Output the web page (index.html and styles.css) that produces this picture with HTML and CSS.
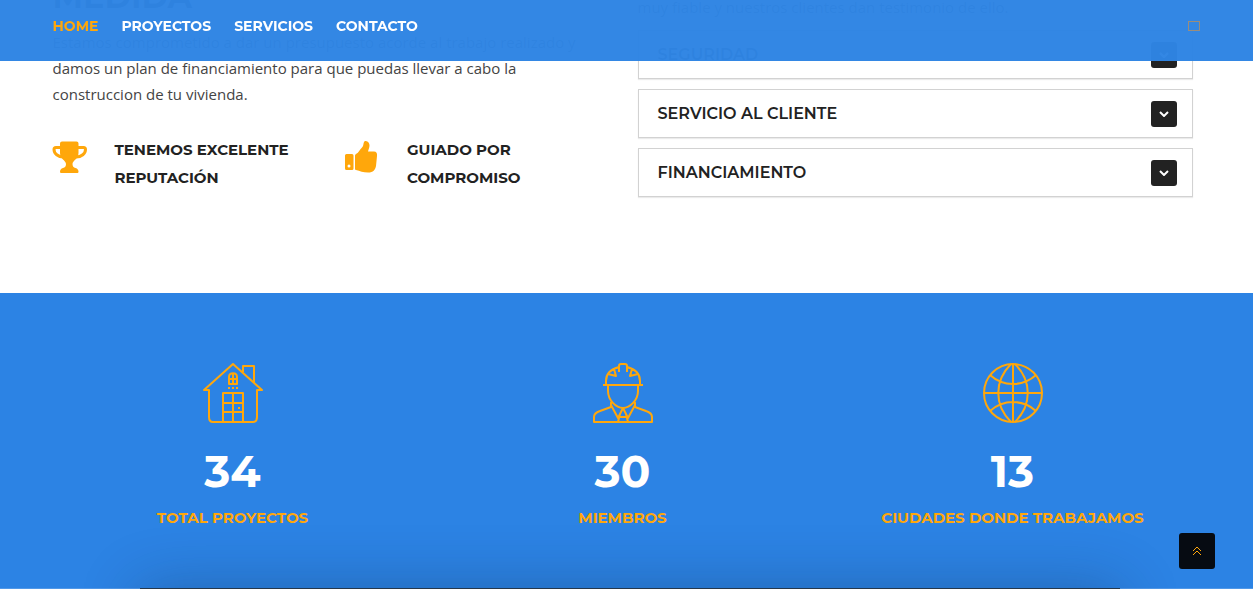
FILE: index.html
```html
<!DOCTYPE html>
<html lang="es">
<head>
<meta charset="utf-8">
<meta name="viewport" content="width=device-width, initial-scale=1">
<title>Construcción a medida</title>
<link rel="stylesheet" href="styles.css">
</head>
<body>
<header class="site-header">
  <div class="container header-row">
    <nav class="menu" aria-label="Principal">
      <a class="active" href="#home">HOME</a>
      <a href="#proyectos">PROYECTOS</a>
      <a href="#servicios">SERVICIOS</a>
      <a href="#contacto">CONTACTO</a>
    </nav>
    <button class="search" type="button" aria-label="Buscar"></button>
  </div>
</header>

<main>
  <section class="about container">
    <div class="intro">
      <h2>MEDIDA</h2>
      <p>Estamos comprometido a dar un presupuesto acorde al trabajo realizado y damos un plan de financiamiento para que puedas llevar a cabo la construccion de tu vivienda.</p>
      <div class="features">
        <div class="feature">
          <svg width="34" height="34" viewBox="0 0 34 34" aria-hidden="true">
            <path d="M7 2.500Q7 .5 9 .5h14.500q2 0 2 2V12c0 6-6 7.500-6 11 0 2.500 1 3.500 3 4 2 .5 3 2 3 3.500Q25.500 32 24.500 32H8q-1 0-1-1.500C7 29 8 27.500 10 27c2-.5 3-1.500 3-4 0-3.500-6-5-6-11z"/>
            <path class="handle" d="M8 6.500H3Q1 6.500 1 8.500c0 4 4 7.500 9.500 7.500M24.500 6.500h6q2 0 2 2c0 4-4 7.500-9.500 7.500"/>
          </svg>
          <h3>TENEMOS EXCELENTE REPUTACIÓN</h3>
        </div>
        <div class="feature">
          <svg width="34" height="34" viewBox="0 0 34 34" aria-hidden="true">
            <path fill-rule="evenodd" d="M1.500 13H7q1.500 0 1.500 1.500v13Q8.500 29 7 29H1.500Q0 29 0 27.500v-13Q0 13 1.500 13zm2.500 10.500a1.500 1.500 0 1 0 0 3 1.500 1.500 0 0 0 0-3z"/>
            <path d="M10 14.500q0-1 1-1.500c3-1.500 3.500-4.500 6-6.500C19 5 18 1 20 0c3-.5 4.500 2 4.500 4.500 0 2-1 4-1.500 6h6q3.500 0 3 4.500L31 25c-1 4-2.500 6.500-8 6.500-5 0-8-1.500-12-2.500q-1 0-1-1z"/>
          </svg>
          <h3>GUIADO POR COMPROMISO</h3>
        </div>
      </div>
    </div>
    <div class="reasons">
      <p>muy fiable y nuestros clientes dan testimonio de ello.</p>
      <button class="panel" type="button" aria-expanded="false">SEGURIDAD
        <span class="toggle"><svg width="10" height="6" viewBox="0 0 10 6"><path d="M1 1l4 4 4-4"/></svg></span></button>
      <button class="panel" type="button" aria-expanded="false">SERVICIO AL CLIENTE
        <span class="toggle"><svg width="10" height="6" viewBox="0 0 10 6"><path d="M1 1l4 4 4-4"/></svg></span></button>
      <button class="panel" type="button" aria-expanded="false">FINANCIAMIENTO
        <span class="toggle"><svg width="10" height="6" viewBox="0 0 10 6"><path d="M1 1l4 4 4-4"/></svg></span></button>
    </div>
  </section>

  <section class="stats">
    <div class="stats-grid">
      <div class="stat">
        <svg width="60" height="60" viewBox="0 0 60 60" aria-hidden="true">
          <path d="M6 27H1L30 1l29 26h-5v27q0 5-4 5H10q-4 0-4-5zM40 9V3h11v16"/>
          <path d="M20 59V30h20v29M30 30v29M20 40h20M20 49h20M26 21v-7c0-5 8-5 8 0v7zM30 10v11M26 16h8"/>
          <path d="M25 25h2M29 25h2M33 25h2M35 45h2"/>
        </svg>
        <strong>34</strong>
        <span>TOTAL PROYECTOS</span>
      </div>
      <div class="stat">
        <svg width="60" height="60" viewBox="0 0 60 60" aria-hidden="true">
          <path d="M13 21V18C13 10 18 6 26 4M34 4c8 2 13 6 13 14v3M10 22h40M26 9V3q0-2 2-2h4q2 0 2 2v6M15 11l8 2-2-7M45 11l-8 2 2-7"/>
          <path d="M15 22v6c0 9 8 17 15 17s15-8 15-17v-6"/>
          <path d="M18 39v5L7 48Q1 50 1 54v5h58v-5q0-4-6-6l-11-4v-5M18 42l7 13 5-10 5 10 7-13M27 51l-2 8M33 51l2 8M27 54h6"/>
        </svg>
        <strong>30</strong>
        <span>MIEMBROS</span>
      </div>
      <div class="stat">
        <svg width="60" height="60" viewBox="0 0 60 60" aria-hidden="true">
          <circle cx="30" cy="30" r="29"/>
          <path d="M30 1v58M1 30h58M28 1C11 18 11 42 28 59M32 1c17 17 17 41 0 58M7 12q10 9 23 9t23-9M7 48q10-9 23-9t23 9"/>
        </svg>
        <strong>13</strong>
        <span>CIUDADES DONDE TRABAJAMOS</span>
      </div>
    </div>
  </section>
  <section class="banner"><div class="banner-box"></div></section>
</main>

<a class="to-top" href="#home" aria-label="Volver arriba">
  <svg width="10" height="10" viewBox="0 0 10 10"><path d="M1 5l4-4 4 4M1 9l4-4 4 4"/></svg>
</a>
</body>
</html>
```
FILE: styles.css
```css
* { box-sizing: border-box; }

body {
  margin: 0;
  height: 100vh;
  overflow: hidden;
  background: #fff;
  color: #444;
  font: 15px/26px "Open Sans", "Noto Sans", sans-serif;
}

h2, h3, .menu, .panel, .stat { font-family: Montserrat, Inter, sans-serif; }
h2, h3, p { margin: 0; }
button { font: inherit; cursor: pointer; }
a { text-decoration: none; }
main { display: flex; flex-direction: column; }

.container {
  width: 100%;
  max-width: 1178px;
  margin: 0 auto;
  padding: 0 23px 0 15px;
}

.site-header {
  position: fixed;
  inset: 0 0 auto;
  z-index: 10;
  background: rgba(47, 133, 227, 0.98);
}

.header-row {
  display: flex;
  align-items: center;
  justify-content: space-between;
  padding-top: 13px;
  padding-bottom: 22px;
}

.menu { display: flex; gap: 23px; font-size: 14px; font-weight: 700; }
.menu a { color: #fff; }
.menu .active { color: #ffa70b; }

.search {
  width: 12px;
  height: 10px;
  margin-right: -7px;
  padding: 0;
  background: none;
  border: 1px solid #9a8d7c;
}

.about {
  display: grid;
  grid-template-columns: 1fr 1fr;
  gap: 30px;
  margin-top: -25px;
  padding-bottom: 96px;
}

h2 { color: #222; font-size: 32px; font-weight: 700; line-height: 44px; margin-bottom: 10px; }

.features { display: grid; grid-template-columns: 1fr 1fr; gap: 30px; margin-top: 29px; }
.feature { display: flex; gap: 28px; }
.feature svg { flex: none; margin-top: 5px; fill: #ffa70b; overflow: visible; }
.feature .handle { fill: none; stroke: #ffa70b; stroke-width: 3; }
h3 { color: #222; font-size: 15px; font-weight: 700; line-height: 28px; }

.reasons { display: flex; flex-direction: column; gap: 10px; padding-top: 19px; }

.panel {
  display: flex;
  align-items: center;
  justify-content: space-between;
  width: 100%;
  padding: 11px 15px 10px 19px;
  background: #fff;
  border: 1px solid #d2d2d2;
  box-shadow: 0 1px 1px rgba(0, 0, 0, 0.08);
  color: #222;
  font-size: 16px;
  font-weight: 600;
  text-align: left;
}

.toggle {
  display: grid;
  place-items: center;
  width: 26px;
  height: 26px;
  border-radius: 3px;
  background: #222;
}
.toggle path { fill: none; stroke: #fff; stroke-width: 2; }

.stats { padding: 70px 8px 57px 0; background: #2c83e4; }
.stats-grid {
  display: grid;
  grid-template-columns: repeat(3, 1fr);
  max-width: 1170px;
  margin: 0 auto;
}
.stat { display: flex; flex-direction: column; align-items: center; color: #ffa70b; font-weight: 700; font-size: 15px; }
.stat svg { fill: none; stroke: #ffa70b; stroke-width: 2; stroke-linejoin: round; }
.stat strong { margin: 23px 0 9px; color: #fff; font-size: 44px; font-weight: 700; line-height: 50px; }

.banner { padding: 0 133px 0 140px; background: #5098e8; }
.banner-box { height: 120px; background: #26384b; box-shadow: 0 0 60px rgba(20, 40, 70, 0.32); }

.to-top {
  position: fixed;
  right: 38px;
  bottom: 20px;
  z-index: 10;
  display: grid;
  place-items: center;
  width: 36px;
  height: 36px;
  border-radius: 3px;
  background: #060b12;
}
.to-top path { fill: none; stroke: #ffa70b; }
```
